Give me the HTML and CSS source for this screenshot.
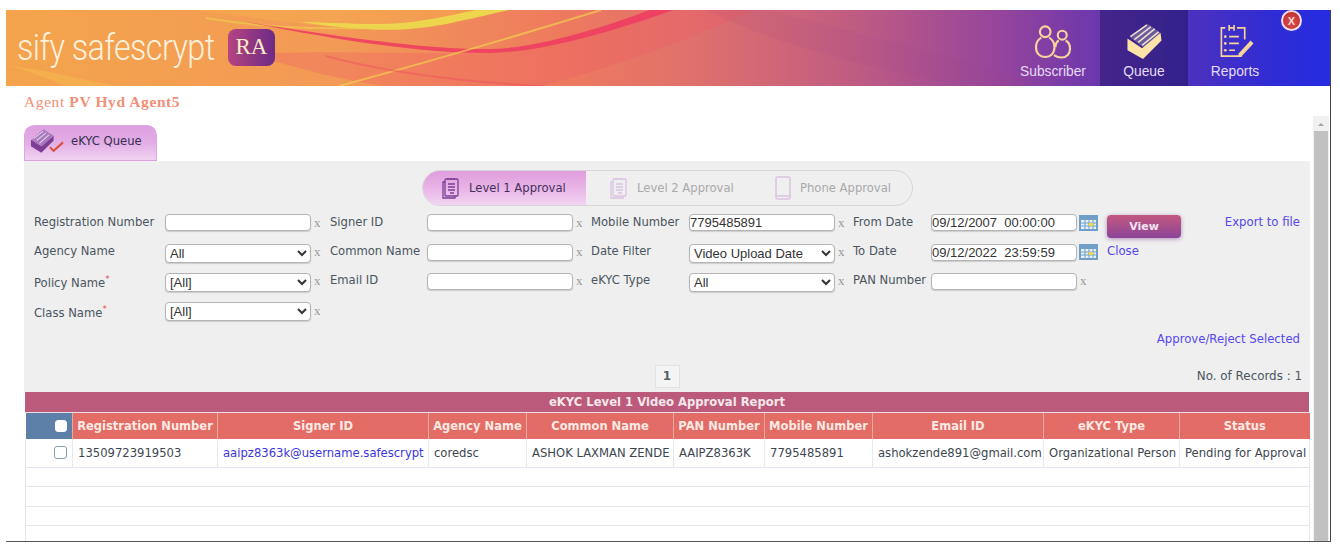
FILE: index.html
```html
<!DOCTYPE html>
<html lang="en">
<head>
<meta charset="utf-8">
<title>eKYC Queue</title>
<link rel="stylesheet" href="styles.css">
</head>
<body>
<div class="frame">
  <header class="top">
    <svg class="waves" viewBox="0 0 1324 76" preserveAspectRatio="none" aria-hidden="true">
      <path d="M0 55 C40 60 70 68 110 76 L60 76 C40 68 20 60 0 55Z" fill="#f7c04e" opacity=".4"/>
      <path d="M190 0 C290 14 350 22 420 16 C460 10 480 5 503 0Z" fill="#f6ae4e" opacity=".5"/>
      <path d="M294 12 C360 22 400 22 440 14 C470 8 485 4 503 0 L470 0 C440 6 410 14 370 14 C340 14 316 12 294 12Z" fill="#ecd84e" opacity=".95"/>
      <path d="M200 8 C270 20 340 20 420 16" fill="none" stroke="#eed24e" stroke-width="2" opacity=".6"/>
      <path d="M480 43 C540 42 610 20 668 0 L750 0 C680 30 610 56 537 76 L380 76 C330 70 280 54 240 44 C320 40 400 44 480 43Z" fill="#ee5a66" opacity=".3"/>
      <path d="M240 12 C330 30 420 44 484 43 C540 42 610 20 668 0 L644 0 C590 20 530 38 484 39 C420 40 330 26 240 12Z" fill="#ef3a62" opacity=".85"/>
      <path d="M333 76 C430 50 530 20 595 0" fill="none" stroke="#f4d250" stroke-width="2" opacity=".65"/>
      <path d="M320 46 C370 60 450 72 537 76" fill="none" stroke="#ef5060" stroke-width="2" opacity=".45"/>
      <path d="M700 0 C780 40 880 60 960 76 L1040 76 C960 50 860 24 760 0Z" fill="#a0408a" opacity=".1"/>
    </svg>
    <div class="brand">
      <span class="brand-name">sify safescrypt</span>
      <span class="brand-badge">RA</span>
    </div>
    <nav class="nav">
      <a class="nav-item nav-first">
        <svg class="nav-icon" viewBox="0 0 40 36" aria-hidden="true">
          <g fill="none" stroke="#f6d49a" stroke-width="2.2">
            <circle cx="12" cy="8" r="5.5"/>
            <path d="M8 14 C3.500 16.500 2.500 20 2.500 24 C2.500 30 6.500 34 12 34 C17.500 34 21.500 30 21.500 24 C21.500 20 20.500 16.500 16 14"/>
            <circle cx="29.500" cy="11.500" r="4.600"/>
            <path d="M26 17 C23.500 18.500 22.500 21 22.500 24"/>
            <path d="M21 32 C23 33.500 26 34.500 29 34.500 C34 34.500 37.500 30.500 37.500 25.500 C37.500 21 36 18.500 33 17"/>
          </g>
        </svg>
        <span>Subscriber</span>
      </a>
      <a class="nav-item is-current">
        <svg class="nav-icon" viewBox="0 0 40 36" aria-hidden="true">
          <path d="M6 14 L24 0 L37 9 L19 24Z" fill="#6a5a9c"/>
          <g fill="none" stroke="#f0e2d0" stroke-width="1.600">
            <path d="M6 13 L23 1"/><path d="M10 16 L27 3"/><path d="M14 19 L31 5"/><path d="M18 22 L35 8"/>
          </g>
          <path d="M3 15 L18 25 L37 9 L38 17 L19 36 L3 27Z" fill="#fde3a7"/>
        </svg>
        <span>Queue</span>
      </a>
      <a class="nav-item">
        <svg class="nav-icon" viewBox="0 0 40 36" aria-hidden="true">
          <g fill="none" stroke="#f6d49a" stroke-width="1.700">
            <path d="M10 4 H6 V33 H27"/>
            <path d="M22 4 H30 V16"/>
            <path d="M14 1 V7 M19 1 V7 M14 4 H19"/>
            <path d="M14 13 H24 M14 20 H24 M14 27 H20"/>
          </g>
          <g fill="#f6d49a">
            <circle cx="10" cy="13" r="1.400"/><circle cx="10" cy="20" r="1.400"/><circle cx="10" cy="27" r="1.400"/>
            <path d="M24 30 L36 17 L39 20 L27 33 L23 34 Z"/>
          </g>
        </svg>
        <span>Reports</span>
      </a>
    </nav>
    <button class="close-x" type="button">X</button>
  </header>

  <div class="body-row">
    <main class="main">
      <h1 class="agent">Agent <b>PV Hyd Agent5</b></h1>
      <div class="tab">
        <svg class="tab-icon" viewBox="0 0 36 28" aria-hidden="true">
          <path d="M1 13 L1 20 L12 27 L25 14 L25 9 L12 20Z" fill="#7d3f95"/>
          <path d="M2 13 L14 2 L25 9 L12 20Z" fill="#a877bd"/>
          <g fill="none" stroke="#e4d2ec" stroke-width="1.100"><path d="M4 12 L14 4"/><path d="M7 14 L17 6"/><path d="M10 17 L20 8"/></g>
          <path d="M21 21 L25 25 L35 16" fill="none" stroke="#d9503f" stroke-width="2.200"/>
        </svg>
        <span>eKYC Queue</span>
      </div>

      <section class="panel">
        <div class="pill">
          <div class="pill-item is-active">
            <svg class="pill-icon" viewBox="0 0 18 22" aria-hidden="true"><g fill="none" stroke="currentColor" stroke-width="1.300"><rect x="3" y="2" width="13" height="17" rx="1"/><path d="M3 5 H1 V21 H13 V19"/><path d="M6 7 H13 M6 10 H13 M6 13 H13 M8 16 H12"/><path d="M6 1 V3 M9 1 V3 M12 1 V3"/></g></svg>
            <span>Level 1 Approval</span>
          </div>
          <div class="pill-item pill-second">
            <svg class="pill-icon" viewBox="0 0 18 22" aria-hidden="true"><g fill="none" stroke="currentColor" stroke-width="1.300"><rect x="3" y="2" width="13" height="17" rx="1"/><path d="M3 5 H1 V21 H13 V19"/><path d="M6 7 H13 M6 10 H13 M6 13 H13 M8 16 H12"/><path d="M6 1 V3 M9 1 V3 M12 1 V3"/></g></svg>
            <span>Level 2 Approval</span>
          </div>
          <div class="pill-item pill-third">
            <svg class="pill-icon phone" viewBox="0 0 16 24" aria-hidden="true"><rect x="1" y="1" width="14" height="22" rx="1.500" fill="none" stroke="currentColor" stroke-width="1.500"/><path d="M1 20 H15" stroke="currentColor" stroke-width="1.500"/></svg>
            <span>Phone Approval</span>
          </div>
        </div>

        <div class="filters">
          <label class="lbl">Registration Number</label>
          <div class="fld"><input class="ctl" type="text"><i>x</i></div>
          <label class="lbl">Signer ID</label>
          <div class="fld"><input class="ctl" type="text"><i>x</i></div>
          <label class="lbl">Mobile Number</label>
          <div class="fld"><input class="ctl" type="text" value="7795485891"><i>x</i></div>
          <label class="lbl">From Date</label>
          <div class="fld"><input class="ctl" type="text" value="09/12/2007  00:00:00"><svg class="cal" viewBox="0 0 19 16" aria-hidden="true"><rect width="19" height="16" fill="#6f9fc8"/><rect x="2" y="5" width="15" height="9" fill="#e8f0f6"/><path d="M2 8 H17 M2 11 H17 M6 5 V14 M10 5 V14 M14 5 V14" stroke="#6f9fc8"/><rect x="10" y="8" width="4" height="3" fill="#f2d93c"/></svg></div>
          <button class="view" type="button">View</button>
          <a class="link end">Export to file</a>

          <label class="lbl">Agency Name</label>
          <div class="fld"><select class="ctl"><option>All</option></select><i>x</i></div>
          <label class="lbl">Common Name</label>
          <div class="fld"><input class="ctl" type="text"><i>x</i></div>
          <label class="lbl">Date Filter</label>
          <div class="fld"><select class="ctl"><option>Video Upload Date</option></select><i>x</i></div>
          <label class="lbl">To Date</label>
          <div class="fld"><input class="ctl" type="text" value="09/12/2022  23:59:59"><svg class="cal" viewBox="0 0 19 16" aria-hidden="true"><rect width="19" height="16" fill="#6f9fc8"/><rect x="2" y="5" width="15" height="9" fill="#e8f0f6"/><path d="M2 8 H17 M2 11 H17 M6 5 V14 M10 5 V14 M14 5 V14" stroke="#6f9fc8"/><rect x="10" y="8" width="4" height="3" fill="#f2d93c"/></svg></div>
          <a class="link">Close</a>
          <span></span>

          <label class="lbl lbl-req">Policy Name<sup>*</sup></label>
          <div class="fld"><select class="ctl"><option>[All]</option></select><i>x</i></div>
          <label class="lbl">Email ID</label>
          <div class="fld"><input class="ctl" type="text"><i>x</i></div>
          <label class="lbl">eKYC Type</label>
          <div class="fld"><select class="ctl"><option>All</option></select><i>x</i></div>
          <label class="lbl">PAN Number</label>
          <div class="fld"><input class="ctl" type="text"><i>x</i></div>
          <span></span>
          <span></span>

          <label class="lbl lbl-req">Class Name<sup>*</sup></label>
          <div class="fld"><select class="ctl"><option>[All]</option></select><i>x</i></div>
        </div>

        <div class="approve"><a class="link">Approve/Reject Selected</a></div>

        <div class="pager-row">
          <span></span>
          <span class="page">1</span>
          <span class="records">No. of Records : 1</span>
        </div>
      </section>

      <div class="report">
        <div class="report-title">eKYC Level 1 Video Approval Report</div>
        <table class="grid">
          <colgroup>
            <col class="c-chk"><col class="c-reg"><col class="c-sig"><col class="c-agn"><col class="c-com"><col class="c-pan"><col class="c-mob"><col class="c-eml"><col class="c-typ"><col class="c-sta">
          </colgroup>
          <thead>
            <tr>
              <th class="th-chk"><input class="chk chk-head" type="checkbox"></th>
              <th>Registration Number</th>
              <th>Signer ID</th>
              <th>Agency Name</th>
              <th>Common Name</th>
              <th>PAN Number</th>
              <th>Mobile Number</th>
              <th>Email ID</th>
              <th>eKYC Type</th>
              <th>Status</th>
            </tr>
          </thead>
          <tbody>
            <tr class="data">
              <td class="td-chk"><input class="chk" type="checkbox"></td>
              <td>13509723919503</td>
              <td><a class="row-link">aaipz8363k@username.safescrypt</a></td>
              <td>coredsc</td>
              <td>ASHOK LAXMAN ZENDE</td>
              <td>AAIPZ8363K</td>
              <td>7795485891</td>
              <td>ashokzende891@gmail.com</td>
              <td>Organizational Person</td>
              <td>Pending for Approval</td>
            </tr>
            <tr class="blank"><td colspan="10"></td></tr>
            <tr class="blank"><td colspan="10"></td></tr>
            <tr class="blank"><td colspan="10"></td></tr>
            <tr class="blank"><td colspan="10"></td></tr>
          </tbody>
        </table>
      </div>
    </main>
    <div class="scroll">
      <span class="scroll-up"></span>
      <span class="scroll-thumb"></span>
    </div>
  </div>
</div>
</body>
</html>
```
FILE: styles.css
```css
* { box-sizing: border-box; }
html, body { height: 100%; }
body {
  margin: 0;
  background: #fff;
  overflow: hidden;
  font-family: "DejaVu Sans", sans-serif;
  font-size: 11.6px;
  color: #4a5560;
}
.frame {
  width: 1325px;
  height: 532px;
  margin: 10px 0 0 6px;
  border-right: 1px solid #444;
  border-bottom: 1px solid #555;
  display: flex;
  flex-direction: column;
  overflow: hidden;
}
.top {
  position: relative;
  flex: none;
  height: 76px;
  display: flex;
  align-items: stretch;
  justify-content: space-between;
  background: linear-gradient(90deg, #f4a44c 0%, #f39a56 25%, #ee7a5e 42%, #e0706c 52%, #c05c82 64%, #96459c 75%, #6f38ac 82%, #4a30c0 90%, #2e2cd6 96%, #262ce0 100%);
}
.waves { position: absolute; inset: 0; width: 100%; height: 100%; }
.brand {
  position: relative;
  display: flex;
  align-items: center;
  gap: 10px;
  padding: 0 0 2px 11px;
}
.brand-name {
  display: block;
  width: 201px;
  font-family: Roboto, sans-serif;
  font-weight: 300;
  font-size: 37px;
  letter-spacing: -0.7px;
  color: #fdf0dc;
  white-space: nowrap;
  transform: scaleX(.875);
  transform-origin: left center;
}
.brand-badge {
  width: 47px;
  height: 37px;
  border-radius: 8px;
  background: linear-gradient(90deg, #b54480, #6d2b86);
  color: #fbeec6;
  font-family: "Liberation Serif", serif;
  font-size: 23px;
  display: flex;
  align-items: center;
  justify-content: center;
}
.nav { position: relative; display: flex; margin-right: 48px; }
.nav-item {
  width: 88px;
  display: flex;
  flex-direction: column;
  align-items: center;
  padding-top: 14px;
  gap: 5px;
  font-family: "Liberation Sans", sans-serif;
  font-size: 13.8px;
  color: #e6dcf6;
}
.nav-first { padding-right: 6px; }
.nav-item:last-child { width: 94px; }
.nav-item.is-current { background: linear-gradient(90deg, #44258a, #33218c); }
.nav-icon { width: 40px; height: 35px; display: block; flex: none; }
.close-x {
  position: absolute;
  right: 28px;
  top: 0;
  width: 21px;
  height: 21px;
  padding: 0;
  border: 2px solid #f0dde2;
  border-radius: 50%;
  background: radial-gradient(circle at 50% 60%, #e04a4a, #b52c2c);
  color: #f5dcdc;
  font: bold 11px "Liberation Sans", sans-serif;
}
.body-row { flex: 1; min-height: 0; display: flex; }
.main { width: 1307px; padding: 0 3px 0 18px; overflow: hidden; }
.agent {
  margin: 0 0 15px;
  padding-top: 7px;
  font: 400 15.5px/17px "Liberation Serif", serif;
  letter-spacing: .6px;
  color: #f09078;
}
.tab {
  width: 133px;
  height: 36px;
  display: flex;
  align-items: center;
  gap: 7px;
  padding: 0 0 5px 5px;
  border: 1px solid #dfa6e0;
  border-bottom-color: #dca0dc;
  border-radius: 10px 10px 0 0;
  background: linear-gradient(180deg, #dd9fe0 0%, #e3aee6 50%, #f1d2f2 100%);
  color: #33304e;
}
.tab-icon { width: 34px; height: 27px; flex: none; }
.panel {
  height: 231px;
  padding-top: 9px;
  background: #efefef;
}
.pill {
  width: 491px;
  height: 36px;
  margin-left: 398px;
  display: flex;
  border: 1px solid #d6d6d6;
  border-radius: 18px;
  overflow: hidden;
  color: #a9a9a9;
}
.pill-item { display: flex; align-items: center; gap: 9px; }
.pill-item.is-active {
  width: 163px;
  padding-left: 19px;
  background: linear-gradient(180deg, #e09cdd 0%, #e8b4e6 50%, #f2d5f2 100%);
  color: #43305c;
}
.pill-second { padding-left: 24px; width: 165px; }
.pill-third { padding-left: 24px; }
.pill-icon { width: 18px; height: 22px; flex: none; color: #7a3f95; }
.pill-second .pill-icon, .pill-third .pill-icon { color: #dcc3e2; }
.phone { width: 16px; height: 24px; }
.filters {
  display: grid;
  grid-template-columns: 131px 165px 97px 164px 98px 164px 78px 176px 1fr auto;
  grid-auto-rows: 29.4px;
  align-items: center;
  margin-top: 2px;
  padding: 0 10px;
}
.lbl { white-space: nowrap; margin-top: -2px; }
.lbl-req { padding-top: 6px; }
.lbl sup { color: #e8505a; font-size: 9px; line-height: 0; vertical-align: 5px; }
.fld { display: flex; align-items: center; gap: 3px; }
.fld i {
  font: normal 13px "Liberation Serif", serif;
  color: #999;
}
.ctl {
  width: 146px;
  height: 17px;
  margin: 0;
  padding: 0;
  border: 1px solid #b4b4b4;
  border-radius: 4px;
  background: #fff;
  font: 13px "Liberation Sans", sans-serif;
  color: #333;
  box-shadow: 0 1px 1px #ccc;
}
select.ctl { height: 19px; margin-top: 2px; }
.cal { width: 19px; height: 16px; flex: none; margin-left: -1px; }
.view {
  grid-column: 9;
  width: 74px;
  height: 23px;
  margin-top: 7px;
  padding: 0;
  border: 0;
  border-radius: 4px;
  background: linear-gradient(180deg, #c2597f, #8c4497);
  box-shadow: 0 1px 4px #b18abd;
  color: #f2e4f0;
  font: bold 11px "DejaVu Sans", sans-serif;
}
.link { color: #5647f0; white-space: nowrap; font-size: 11.7px; }
.filters .link { margin-top: -2px; }
.end { justify-self: end; }
.approve { text-align: right; padding-right: 10px; margin-top: 5px; line-height: 17px; }
.pager-row {
  display: grid;
  grid-template-columns: 1fr auto 1fr;
  align-items: center;
  margin-top: 17px;
}
.page {
  width: 25px;
  height: 23px;
  border: 1px solid #e2e2e2;
  background: #f4f4f4;
  font: bold 12px/21px "DejaVu Sans", sans-serif;
  color: #55606a;
  text-align: center;
}
.records { justify-self: end; margin-right: 8px; font-size: 11.9px; color: #4a5560; }
.report { margin: 0 1px; }
.report-title {
  height: 21px;
  border-bottom: 1px solid #e8e0e4;
  background: #bc5a7c;
  color: #f6e7ea;
  font: bold 11.6px/21px "DejaVu Sans", sans-serif;
  text-align: center;
}
.grid { width: 1284px; table-layout: fixed; border-collapse: collapse; }
.c-chk { width: 47px; }
.c-reg { width: 145px; }
.c-sig { width: 211px; }
.c-agn { width: 98px; }
.c-com { width: 147px; }
.c-pan { width: 91px; }
.c-mob { width: 108px; }
.c-eml { width: 171px; }
.c-typ { width: 136px; }
.c-sta { width: 130px; }
.grid th {
  height: 26px;
  padding: 0;
  border-left: 1px solid #eca89f;
  background: #e36d66;
  color: #fbe9e4;
  font: bold 11.5px "DejaVu Sans", sans-serif;
  white-space: nowrap;
}
.grid th.th-chk { background: #5d80a8; border-left: 0; text-align: right; padding-right: 5px; }
.grid td {
  padding: 0 5px;
  border-bottom: 1px solid #e1e6ef;
  white-space: nowrap;
  overflow: hidden;
}
.data td {
  height: 28px;
  border-left: 1px solid #e4e9f2;
  color: #3d4650;
}
.data td:first-child { border-left: 1px solid #e1e6ef; }
.data td:last-child { border-right: 1px solid #e1e6ef; padding-right: 0; }
.td-chk { text-align: right; }
.grid .data .td-chk { padding-right: 5px; }
.blank td { height: 19.5px; border-left: 1px solid #e1e6ef; border-right: 1px solid #e1e6ef; }
.row-link { color: #3b35e0; }
.chk {
  appearance: none;
  display: block;
  margin: 0 0 0 auto;
  width: 13px;
  height: 13px;
  border: 1.5px solid #8a9cb5;
  border-radius: 3px;
  background: #fff;
}
.chk-head { border-color: #fff; width: 12px; height: 12px; }
.scroll {
  width: 16px;
  margin: 30px 1px 0 0;
  background: #f1f1f1;
  display: flex;
  flex-direction: column;
  align-items: center;
}
.scroll-up {
  margin-top: 7px;
  border: 3px solid transparent;
  border-top: 0;
  border-bottom: 3px solid #a5a5a5;
}
.scroll-thumb { margin-top: 5px; width: 14px; flex: 1; background: #c1c1c1; }
```
